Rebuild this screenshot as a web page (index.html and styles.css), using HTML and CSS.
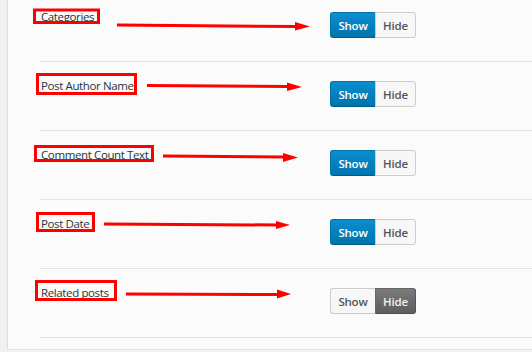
FILE: index.html
```html
<!DOCTYPE html>
<html>
<head>
<meta charset="utf-8">
<link rel="stylesheet" href="styles.css">
</head>
<body>
<div class="page">
  <div class="panel">
    <div class="rows">
      <div class="row">
        <div class="label">Categories</div>
        <div class="toggle"><span class="seg seg-show on">Show</span><span class="seg seg-hide">Hide</span></div>
      </div>
      <div class="row">
        <div class="label">Post Author Name</div>
        <div class="toggle"><span class="seg seg-show on">Show</span><span class="seg seg-hide">Hide</span></div>
      </div>
      <div class="row">
        <div class="label">Comment Count Text</div>
        <div class="toggle"><span class="seg seg-show on">Show</span><span class="seg seg-hide">Hide</span></div>
      </div>
      <div class="row">
        <div class="label">Post Date</div>
        <div class="toggle"><span class="seg seg-show on">Show</span><span class="seg seg-hide">Hide</span></div>
      </div>
      <div class="row">
        <div class="label">Related posts</div>
        <div class="toggle"><span class="seg seg-show">Show</span><span class="seg seg-hide on-dark">Hide</span></div>
      </div>
    </div>
  </div>
  <svg class="annot" width="532" height="352" viewBox="0 0 532 352" xmlns="http://www.w3.org/2000/svg">
    <g fill="none" stroke="#f00" stroke-width="3">
      <rect x="34.5" y="10" width="64" height="12.5"/>
      <rect x="37.5" y="74.5" width="98" height="19"/>
      <rect x="35.5" y="146.5" width="117" height="14"/>
      <rect x="37.5" y="213.5" width="56" height="17"/>
      <rect x="36.5" y="281.5" width="79" height="18"/>
      <path d="M117 25 L296 26.5"/>
      <path d="M147 85.5 L288 86.5"/>
      <path d="M163 156 L284 157"/>
      <path d="M104 224 L277 225"/>
      <path d="M126 294 L278 294.5"/>
    </g>
    <g fill="#f00">
      <polygon points="295,22 310,26.5 295,30.5"/>
      <polygon points="287,82.5 302,87 287,91"/>
      <polygon points="283,153 298,157.5 283,162"/>
      <polygon points="276,221 290,225 276,229"/>
      <polygon points="277,289.5 291,294 277,298.5"/>
    </g>
  </svg>
</div>
</body>
</html>
```
FILE: styles.css
```css
html, body {
  margin: 0;
  padding: 0;
  background: #f1f1f1;
  overflow: hidden;
}
.page {
  position: relative;
  width: 532px;
  height: 352px;
  overflow: hidden;
  font-family: "Open Sans", "Noto Sans", sans-serif;
}
.panel {
  margin-left: 7px;
  border-left: 1px solid #dedede;
  border-bottom: 1px solid #e2e2e2;
  background: #fbfbfb;
  padding: 0 0 11px 32px;
  display: flex;
  flex-direction: column;
}
.rows {
  margin-top: -7px;
  display: flex;
  flex-direction: column;
}
.row {
  height: 68px;
  border-bottom: 1px solid #e3e3e3;
  display: flex;
  align-items: flex-start;
}
.label {
  width: 289px;
  padding: 16px 0 0 1px;
  font-size: 11.5px;
  letter-spacing: -0.38px;
  line-height: 16px;
  color: #2c3338;
}
.toggle {
  margin-top: 19px;
  display: flex;
  height: 26px;
}
.seg {
  box-sizing: border-box;
  height: 26px;
  display: flex;
  align-items: center;
  justify-content: center;
  font-size: 11.5px;
  font-weight: 600;
  letter-spacing: -0.2px;
  color: #555;
  background: #f7f7f7;
  border: 1px solid #cccccc;
}
.seg-show {
  width: 45px;
  border-radius: 3px 0 0 3px;
  border-right: none;
}
.seg-hide {
  width: 41px;
  border-radius: 0 3px 3px 0;
}
.seg.on {
  color: #fff;
  background: linear-gradient(#0b8ed0, #0073ab);
  border-color: #0073aa #006799 #005e8c #0073aa;
}
.seg.on-dark {
  color: #f1f1f1;
  background: linear-gradient(#7a7a7a, #5e5e5e);
  border-color: #666 #555 #4c4c4c #666;
}
.annot {
  position: absolute;
  top: 0;
  left: 0;
  pointer-events: none;
}
```
